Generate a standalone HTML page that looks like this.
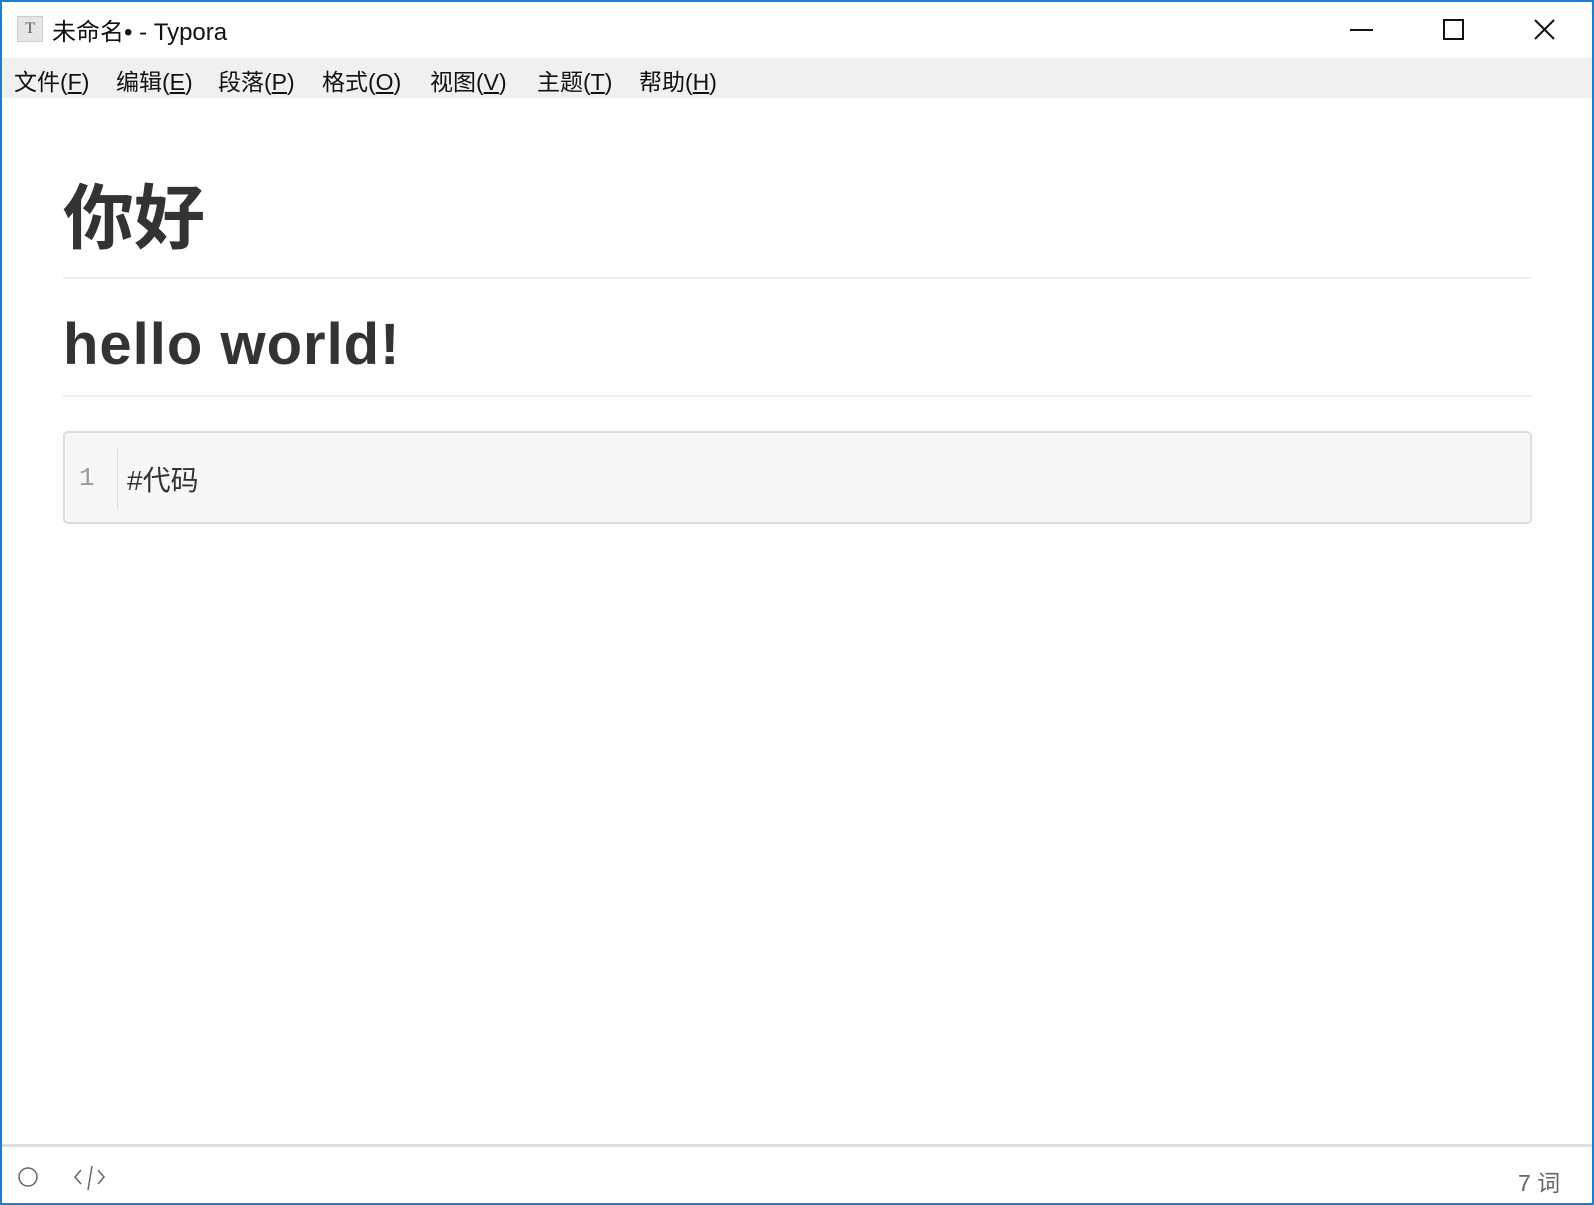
<!DOCTYPE html>
<html><head><meta charset="utf-8"><style>
*{margin:0;padding:0;box-sizing:border-box}
body{width:1594px;height:1205px;overflow:hidden;background:#fff;font-family:"Liberation Sans","Noto Sans CJK SC",sans-serif;position:relative}
.win{position:absolute;left:0;top:0;width:1594px;height:1205px;border:2px solid #1a7fd4;z-index:10}
.title{position:absolute;left:0;top:0;width:100%;height:58px;background:#fff}
.title .ic{position:absolute;left:17px;top:16px;width:26px;height:26px;background:#e6e6e6;border:1px solid #ccc;font:16px "Liberation Serif",serif;color:#555;text-align:center;line-height:24px}
.title .t{position:absolute;left:52px;top:12px;font-size:24px;color:#111}
.menu{position:absolute;left:0;top:58px;width:100%;height:40px;background:#f0f0f0;font-size:23px;color:#111}
.menu span{position:absolute;top:5px}
.menu u{text-decoration:underline}
.h1{position:absolute;left:63px;top:162px;font-size:71px;font-weight:bold;color:#333}
.hr{position:absolute;left:63px;width:1469px;height:2px;background:#eee}
.h2{position:absolute;left:63px;top:311px;font-size:58px;font-weight:bold;color:#333;letter-spacing:1px}
.code{position:absolute;left:63px;top:431px;width:1469px;height:93px;background:#f7f7f7;border:2px solid #ddd;border-radius:5px}
.code .ln{position:absolute;left:14px;top:30px;font:26px "Liberation Mono",monospace;color:#999}
.code .sep{position:absolute;left:52px;top:16px;width:1px;height:60px;background:#ddd}
.code .c{position:absolute;left:62px;top:26px;font-size:28px;color:#333}
.status{position:absolute;left:0;top:1144px;width:100%;height:3px;background:#ddd}
</style></head><body>
<div class="title"><div class="ic">T</div><div class="t">未命名• - Typora</div>
<svg style="position:absolute;left:1340px;top:16px" width="240" height="28" fill="none" stroke="#111" stroke-width="2">
<line x1="10" y1="14" x2="33" y2="14"/>
<rect x="104" y="4" width="19" height="19"/>
<line x1="195" y1="4" x2="214" y2="23"/><line x1="214" y1="4" x2="195" y2="23"/></svg>
</div>
<div class="menu">
<span style="left:14px">文件(<u>F</u>)</span>
<span style="left:116px">编辑(<u>E</u>)</span>
<span style="left:218px">段落(<u>P</u>)</span>
<span style="left:322px">格式(<u>O</u>)</span>
<span style="left:430px">视图(<u>V</u>)</span>
<span style="left:537px">主题(<u>T</u>)</span>
<span style="left:639px">帮助(<u>H</u>)</span>
</div>
<div class="h1">你好</div>
<div class="hr" style="top:277px"></div>
<div class="h2">hello world!</div>
<div class="hr" style="top:395px"></div>
<div class="code"><div class="ln">1</div><div class="sep"></div><div class="c">#代码</div></div>
<div class="status"></div>
<svg style="position:absolute;left:16px;top:1165px" width="100" height="26" fill="none" stroke="#666" stroke-width="1.5">
<circle cx="12" cy="12" r="9"/>
<polyline points="65,5 59,12 65,19"/><polyline points="82,5 88,12 82,19"/><line x1="76" y1="1" x2="72" y2="25"/></svg>
<div style="position:absolute;left:1518px;top:1164px;font-size:23px;color:#666">7 词</div>
<div class="win"></div>
</body></html>
